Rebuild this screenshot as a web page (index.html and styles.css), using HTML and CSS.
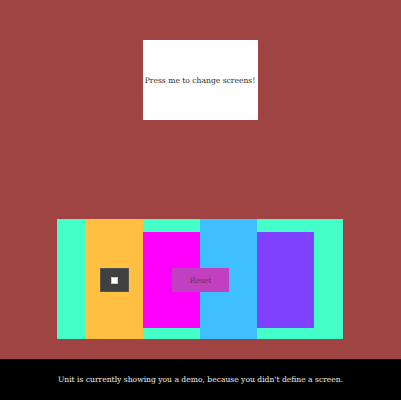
FILE: index.html
```html
<!DOCTYPE html>
<html>
<head>
<meta charset="utf-8">
<link rel="stylesheet" href="styles.css">
</head>
<body>
<div class="stage">
  <div class="screen-btn">Press me to change screens!</div>
  <div class="panel">
    <div class="col green"></div>
    <div class="col orange"><div class="toggle"><span class="dot"></span></div></div>
    <div class="col inset"><div class="fill magenta"></div></div>
    <div class="col blue"></div>
    <div class="col inset"><div class="fill purple"></div></div>
    <div class="col green"></div>
    <div class="reset">Reset</div>
  </div>
</div>
<div class="footer">Unit is currently showing you a demo, because you didn't define a screen.</div>
</body>
</html>
```
FILE: styles.css
```css
html, body { margin: 0; padding: 0; }
body {
  width: 401px;
  height: 400px;
  background: #9f4343;
  font-family: "DejaVu Serif", "Liberation Serif", serif;
  display: flex;
  flex-direction: column;
  overflow: hidden;
}
.stage {
  width: 400px;
  height: 359px;
  display: flex;
  flex-direction: column;
  align-items: center;
}
.screen-btn {
  margin-top: 40px;
  width: 115px;
  height: 80px;
  background: #ffffff;
  color: #2a2a2a;
  font-size: 7.6px;
  display: flex;
  align-items: center;
  justify-content: center;
  white-space: nowrap;
}
.panel {
  margin-top: 99px;
  position: relative;
  display: grid;
  grid-template-columns: 28px 58px 57px 57px 57px 29px;
  height: 120px;
  background: #44ffc8;
}
.col { height: 120px; }
.green { background: #44ffc8; }
.orange {
  background: #ffbf40;
  display: flex;
  align-items: center;
  justify-content: center;
}
.blue { background: #40bfff; }
.inset {
  padding: 13px 0 11px;
  box-sizing: border-box;
}
.fill { height: 100%; }
.magenta { background: #ff00ff; }
.purple { background: #8040ff; }
.toggle {
  width: 27px;
  height: 22px;
  background: #404040;
  border: 1px solid #555;
  display: flex;
  align-items: center;
  justify-content: center;
  margin-left: 1px;
  margin-top: 2px;
}
.dot {
  width: 5px;
  height: 5px;
  background: #fff;
  border: 0.5px solid #ccc;
}
.reset {
  position: absolute;
  left: 115px;
  top: 49px;
  width: 57px;
  height: 24px;
  background: #c040c0;
  color: #6a2f6a;
  font-size: 7.6px;
  display: flex;
  align-items: center;
  justify-content: center;
}
.footer {
  height: 41px;
  background: #000;
  color: #f0f0f0;
  font-size: 7.6px;
  display: flex;
  align-items: center;
  justify-content: center;
  white-space: nowrap;
}
```
